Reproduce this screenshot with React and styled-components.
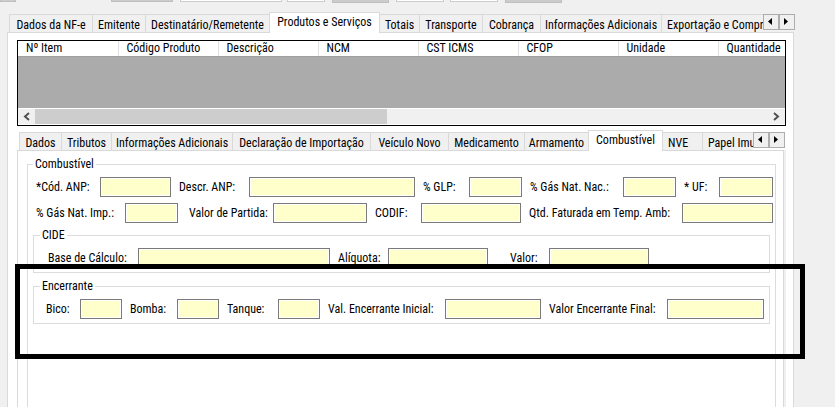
import React, { useState } from 'react';
import styled, { createGlobalStyle } from 'styled-components';

const columns = ['Nº Item', 'Código Produto', 'Descrição', 'NCM', 'CST ICMS', 'CFOP', 'Unidade', 'Quantidade'];

const mainTabs = [
    { name: 'Dados da NF-e', width: 83 },
    { name: 'Emitente', width: 53 },
    { name: 'Destinatário/Remetente', width: 124 },
    { name: 'Produtos e Serviços', width: 111 },
    { name: 'Totais', width: 39 },
    { name: 'Transporte', width: 63 },
    { name: 'Cobrança', width: 58 },
    { name: 'Informações Adicionais', width: 121 },
    { name: 'Exportação e Compras', width: 121, left: true },
];

const itemTabs = [
    { name: 'Dados', width: 42 },
    { name: 'Tributos', width: 50 },
    { name: 'Informações Adicionais', width: 121 },
    { name: 'Declaração de Importação', width: 138 },
    { name: 'Veículo Novo', width: 78 },
    { name: 'Medicamento', width: 76 },
    { name: 'Armamento', width: 64 },
    { name: 'Combustível', width: 75 },
    { name: 'NVE', width: 39, left: true },
    { name: 'Papel Imune', width: 76, left: true },
];

function Tabs({ items, initial }) {
    const [active, setActive] = useState(initial);
    return (
        <TabBar>
            <TabList role="tablist">
                {
                    items.map((item) => {
                        return <Tab
                            key={item.name}
                            type="button"
                            role="tab"
                            aria-selected={item.name === active}
                            $active={item.name === active}
                            $width={item.width}
                            $left={item.left}
                            onClick={() => setActive(item.name)}
                        >
                            {item.name}
                        </Tab>
                    })
                }
            </TabList>
            <TabScroll>
                <ScrollButton type="button" aria-label="Abas anteriores">
                    <svg width="4" height="7" viewBox="0 0 4 7"><path d="M4 0v7L0 3.500z" /></svg>
                </ScrollButton>
                <ScrollButton type="button" aria-label="Próximas abas">
                    <svg width="4" height="7" viewBox="0 0 4 7"><path d="M0 0v7L4 3.500z" /></svg>
                </ScrollButton>
            </TabScroll>
        </TabBar>
    );
}

function Field({ id, label }) {
    return (
        <>
            <Label htmlFor={id}>{label}</Label>
            <Input id={id} type="text" />
        </>
    );
}

function App() {
    return (
        <>
            <GlobalStyle />
            <Toolbar>
                <ToolPiece $width={16} $filled />
                <ToolPiece $width={62} $filled $before={95} />
                <ToolPiece $width={102} $before={7} />
                <ToolPiece $width={38} $before={5} />
                <ToolPiece $width={57} $filled $tall $before={7} />
                <ToolPiece $width={48} $before={7} />
                <ToolPiece $width={48} $before={6} />
                <ToolPiece $width={57} $filled $tall $before={7} />
            </Toolbar>
            <Window>
                <Tabs items={mainTabs} initial="Produtos e Serviços" />
                <MainPanel>
                    <GridBox>
                        <GridView>
                            <thead>
                                <tr>
                                    {columns.map((name) => <th key={name} scope="col">{name}</th>)}
                                </tr>
                            </thead>
                        </GridView>
                        <ScrollBar>
                            <ArrowButton type="button" aria-label="Rolar para a esquerda">
                                <svg width="7" height="9" viewBox="0 0 7 9"><path d="M6 1L2 4.500L6 8" /></svg>
                            </ArrowButton>
                            <Track><Thumb /></Track>
                            <ArrowButton type="button" aria-label="Rolar para a direita">
                                <svg width="7" height="9" viewBox="0 0 7 9"><path d="M1 1L5 4.500L1 8" /></svg>
                            </ArrowButton>
                        </ScrollBar>
                    </GridBox>
                    <ItemArea>
                        <Tabs items={itemTabs} initial="Combustível" />
                        <ItemPanel>
                            <Group>
                                <legend>Combustível</legend>
                                <Row $columns="72px 71fr 78px 166fr 54px 53fr 101px 53fr 43px 54fr">
                                    <Field id="codAnp" label="*Cód. ANP:" />
                                    <Field id="descrAnp" label="Descr. ANP:" />
                                    <Field id="glp" label="% GLP:" />
                                    <Field id="gasNac" label="% Gás Nat. Nac.:" />
                                    <Field id="uf" label="* UF:" />
                                </Row>
                                <Row $columns="97px 53fr 3px 92px 94fr 54px 100fr 161px 91fr">
                                    <Field id="gasImp" label="% Gás Nat. Imp.:" />
                                    <span />
                                    <Field id="partida" label="Valor de Partida:" />
                                    <Field id="codif" label="CODIF:" />
                                    <Field id="qtdAmb" label="Qtd. Faturada em Temp. Amb:" />
                                </Row>
                                <SubGroup>
                                    <legend>CIDE</legend>
                                    <Row $indent={2} $columns="98px 192fr 58px 100fr 14px 47px 100fr 115fr">
                                        <Field id="baseCide" label="Base de Cálculo:" />
                                        <Field id="aliquota" label="Alíquota:" />
                                        <span />
                                        <Field id="valorCide" label="Valor:" />
                                    </Row>
                                </SubGroup>
                                <Marked>
                                    <SubGroup>
                                        <legend>Encerrante</legend>
                                        <Row $columns="42px 42fr 55px 42fr 59px 42fr 125px 96fr 126px 97fr">
                                            <Field id="bico" label="Bico:" />
                                            <Field id="bomba" label="Bomba:" />
                                            <Field id="tanque" label="Tanque:" />
                                            <Field id="encInicial" label="Val. Encerrante Inicial:" />
                                            <Field id="encFinal" label="Valor Encerrante Final:" />
                                        </Row>
                                    </SubGroup>
                                    <Marker />
                                </Marked>
                            </Group>
                        </ItemPanel>
                    </ItemArea>
                </MainPanel>
            </Window>
        </>
    );
}

const GlobalStyle = createGlobalStyle`
    * {
        box-sizing: border-box;
    }
    html, body, #root {
        height: 100%;
    }
    body {
        margin: 0;
        overflow: hidden;
        background: #f0f0f0;
    }
    #root {
        display: flex;
        flex-direction: column;
    }
    body, button, input {
        font-family: 'Roboto Condensed', 'Liberation Sans', sans-serif;
        font-size: 12px;
        line-height: 14px;
        color: #000;
    }
`;

const Toolbar = styled.div`
    display: flex;
    align-items: flex-start;
    height: 12px;
    flex-shrink: 0;
`;

const ToolPiece = styled.div`
    width: ${(props) => props.$width}px;
    height: ${(props) => (props.$tall ? 3 : 2)}px;
    margin-left: ${(props) => props.$before || 0}px;
    background: ${(props) => (props.$filled ? '#ccc' : '#fff')};
    border: 1px solid ${(props) => (props.$filled ? '#bfbfbf' : '#ccc')};
    border-top: none;
`;

const Window = styled.div`
    display: flex;
    flex-direction: column;
    flex: 1;
    margin: 0 41px 0 7px;
`;

const TabBar = styled.div`
    display: flex;
    align-items: flex-start;
    position: relative;
    height: 20px;
    flex-shrink: 0;
    margin-right: -1px;
    padding-left: 2px;
`;

const TabList = styled.div`
    display: flex;
    align-items: flex-end;
    flex: 1;
    min-width: 0;
    height: 21px;
    padding-bottom: 1px;
    overflow: hidden;
`;

const Tab = styled.button`
    flex: 0 0 ${(props) => props.$width}px;
    height: ${(props) => (props.$active ? 21 : 18)}px;
    margin-bottom: ${(props) => (props.$active ? -1 : 0)}px;
    padding: ${(props) => (props.$active ? '0 0 3px' : '2px 0 0')};
    padding-left: ${(props) => (props.$left ? 5 : 0)}px;
    text-align: ${(props) => (props.$left ? 'left' : 'center')};
    white-space: nowrap;
    background: ${(props) => (props.$active ? '#fff' : '#f0f0f0')};
    border: 1px solid #d9d9d9;
    border-bottom: none;
    border-right: none;

    &[aria-selected='true'] {
        border-right: 1px solid #d9d9d9;
    }
    &[aria-selected='true'] + & {
        border-left: none;
    }
`;

const TabScroll = styled.div`
    display: flex;
    padding-top: 2px;
`;

const ScrollButton = styled.button`
    display: flex;
    align-items: center;
    justify-content: center;
    width: 16px;
    height: 16px;
    padding: 0 2px 2px 0;
    background: #f0f0f0;
    border: 1px solid #adadad;
`;

const MainPanel = styled.div`
    display: flex;
    flex-direction: column;
    flex: 1;
    padding: 7px 7px 0 9px;
    background: #fff;
    border: 1px solid #d9d9d9;
    border-bottom: none;
`;

const GridBox = styled.div`
    display: flex;
    flex-direction: column;
    height: 86px;
    background: #ababab;
    border: 1px solid #000;
`;

const GridView = styled.table`
    width: 100%;
    table-layout: fixed;
    border-collapse: collapse;
    background: #fff;

    th {
        width: 100px;
        height: 15px;
        padding: 0 0 0 8px;
        font-weight: normal;
        line-height: 14px;
        text-align: left;
        white-space: nowrap;
        border-right: 1px solid #e0e0e0;
        border-bottom: 1px solid #a0a0a0;
    }
    th:last-child {
        width: auto;
        border-right: none;
    }
`;

const ScrollBar = styled.div`
    display: flex;
    height: 17px;
    margin-top: auto;
    background: #f0f0f0;
    border-top: 1px solid #fff;
    border-bottom: 1px solid #fff;
`;

const ArrowButton = styled.button`
    display: flex;
    align-items: center;
    justify-content: center;
    width: 17px;
    padding: 0;
    background: none;
    border: none;

    path {
        fill: none;
        stroke: #505050;
        stroke-width: 2;
    }
`;

const Track = styled.div`
    flex: 1;
`;

const Thumb = styled.div`
    width: 48%;
    height: 100%;
    background: #cdcdcd;
`;

const ItemArea = styled.div`
    display: flex;
    flex-direction: column;
    flex: 1;
    margin: 4px 2px 0 0;
`;

const ItemPanel = styled.div`
    display: flex;
    flex-direction: column;
    flex: 1;
    padding: 7px 7px 0 9px;
    border: 1px solid #d9d9d9;
    border-bottom: none;
    box-shadow: 2px 0 0 #f0f0f0;
`;

const Group = styled.fieldset`
    flex: 1;
    min-width: 0;
    margin: 0;
    padding: 6px 2px 0 0;
    border: 1px solid #dcdcdc;
    border-bottom: none;

    legend {
        margin-left: 5px;
        padding: 0 2px;
        line-height: 13px;
    }
`;

const SubGroup = styled.fieldset`
    min-width: 0;
    margin: 0 3px 0 5px;
    padding: 6px 5px 4px 4px;
    border: 1px solid #dcdcdc;

    legend {
        margin-left: 2px;
    }
`;

const Row = styled.div`
    display: grid;
    grid-template-columns: ${(props) => props.$columns};
    align-items: center;
    margin-bottom: 6px;
    padding-left: ${(props) => props.$indent || 0}px;

    ${SubGroup} & {
        margin-bottom: 0;
    }
`;

const Label = styled.label`
    padding-left: 8px;
    white-space: nowrap;
`;

const Input = styled.input`
    width: 100%;
    min-width: 0;
    height: 20px;
    padding: 0 2px;
    background: #ffffcc;
    border: 1px solid #7a7a7a;
    box-shadow: inset 0 0 0 1px #fff;
`;

const Marked = styled.div`
    position: relative;
    margin-top: 7px;
`;

/* thick frame drawn over the form to call out the group */
const Marker = styled.div`
    position: absolute;
    top: -16px;
    right: -32px;
    bottom: -35px;
    left: -13px;
    border: 5px solid #000;
    pointer-events: none;
`;

export default App;
